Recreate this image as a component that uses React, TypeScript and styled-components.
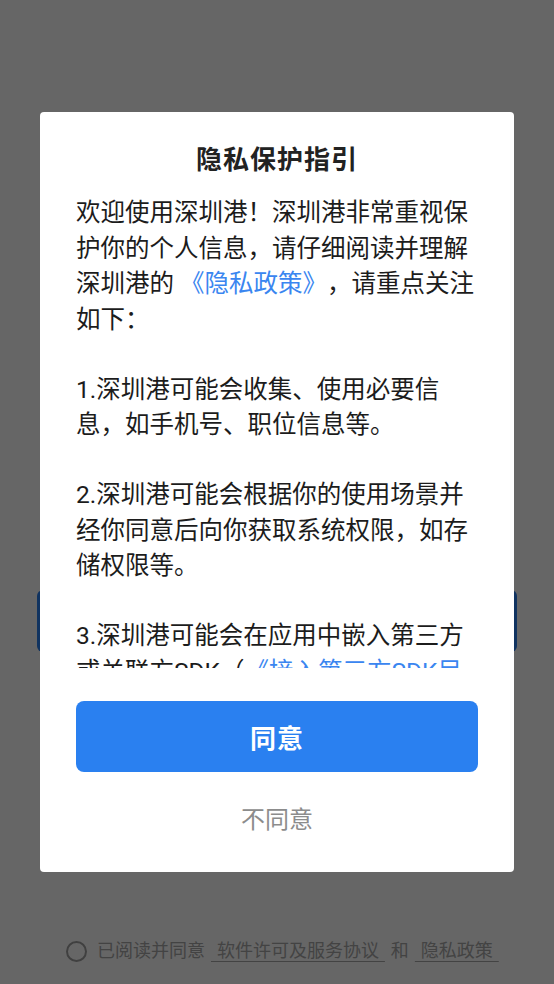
import styled, { createGlobalStyle } from 'styled-components';

const GlobalStyle = createGlobalStyle`
  html, body {
    margin: 0;
    padding: 0;
  }

  body {
    font-family: Roboto, "Noto Sans CJK SC", "Noto Sans", sans-serif;
    background: #ffffff;
    text-spacing-trim: space-all;
  }
`;

const PageLayout = styled.div`
  min-height: 100vh;
  display: flex;
  flex-direction: column;
  padding-top: 590px;
  box-sizing: border-box;
`;

const LoginButton = styled.button`
  height: 62px;
  margin: 0 37px;
  border: none;
  border-radius: 6px;
  background: #2a7fef;
  color: #ffffff;
  font-family: inherit;
  font-size: 24px;
`;

const Agreement = styled.div`
  margin-top: auto;
  padding: 0 0 21px 66px;
  display: flex;
  align-items: center;
  font-size: 18px;
  line-height: 24px;
  color: #a8a8a8;
`;

const Radio = styled.span`
  width: 17px;
  height: 17px;
  border: 2px solid #a0a0a0;
  border-radius: 50%;
  margin-right: 10px;
`;

const AgreementText = styled.span`
  white-space: pre;
  word-spacing: 1.5px;
`;

const AgreementLink = styled.span`
  text-decoration: underline;
  text-underline-offset: 4px;
`;

const Overlay = styled.div`
  position: fixed;
  inset: 0;
  background: rgba(0, 0, 0, 0.6);
  display: flex;
  align-items: center;
  justify-content: center;
`;

const Dialog = styled.div`
  width: 474px;
  box-sizing: border-box;
  padding: 30px 36px 34px;
  background: #ffffff;
  border-radius: 4px;
  display: flex;
  flex-direction: column;
`;

const Title = styled.h1`
  margin: 0 0 17px;
  text-align: center;
  font-size: 26px;
  line-height: 36px;
  font-weight: 700;
  letter-spacing: 1px;
  color: #222222;
`;

const Body = styled.div`
  height: 473px;
  overflow: hidden;
  font-size: 24.5px;
  line-height: 35.5px;
  color: #1c1c1c;
`;

const Paragraph = styled.p`
  margin: 0;

  & + & {
    margin-top: 34.5px;
  }
`;

const Link = styled.span`
  color: #3a86f0;
`;

const AgreeButton = styled.button`
  margin-top: 33px;
  height: 71px;
  border: none;
  border-radius: 8px;
  background: #2a80f0;
  color: #ffffff;
  font-family: inherit;
  font-size: 26px;
  font-weight: 700;
  letter-spacing: 1px;
  cursor: pointer;
`;

const DisagreeButton = styled.button`
  margin-top: 30px;
  height: 36px;
  border: none;
  background: transparent;
  color: #8c8c8c;
  font-family: inherit;
  font-size: 24px;
  line-height: 36px;
  padding: 0;
  cursor: pointer;
`;

function App() {
  return (
    <>
      <GlobalStyle />
      <PageLayout>
        <LoginButton>登录</LoginButton>
        <Agreement>
          <Radio />
          <AgreementText>
            {'已阅读并同意 '}
            <AgreementLink> 软件许可及服务协议 </AgreementLink>
            {' 和 '}
            <AgreementLink> 隐私政策 </AgreementLink>
          </AgreementText>
        </Agreement>
      </PageLayout>
      <Overlay>
        <Dialog>
          <Title>隐私保护指引</Title>
          <Body>
            <Paragraph>
              欢迎使用深圳港！深圳港非常重视保护你的个人信息，请仔细阅读并理解深圳港的
              <Link> 《隐私政策》</Link>，请重点关注如下：
            </Paragraph>
            <Paragraph>1.深圳港可能会收集、使用必要信息，如手机号、职位信息等。</Paragraph>
            <Paragraph>
              2.深圳港可能会根据你的使用场景并经你同意后向你获取系统权限，如存储权限等。
            </Paragraph>
            <Paragraph>
              3.深圳港可能会在应用中嵌入第三方或关联方SDK（
              <Link>《接入第三方SDK目录》</Link>
              ），用于实现相关功能，我们会对其进行严格的安全检测。
            </Paragraph>
          </Body>
          <AgreeButton>同意</AgreeButton>
          <DisagreeButton>不同意</DisagreeButton>
        </Dialog>
      </Overlay>
    </>
  );
}

export default App;
